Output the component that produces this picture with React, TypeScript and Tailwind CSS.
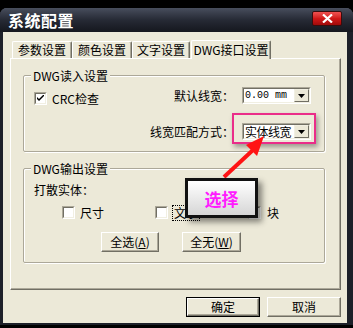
import React from "react";

const font = "font-['Noto_Sans_CJK_SC','Noto_Sans',sans-serif]";

const Check = ({ checked = false }: { checked?: boolean }) => (
  <div className="w-[13px] h-[13px] shrink-0 border border-[#aca899] border-r-white border-b-white">
    <div className="w-full h-full bg-white border border-[#716f64] border-r-[#f1efe2] border-b-[#f1efe2] flex items-center justify-center">
      {checked && (
        <svg width="7" height="7" viewBox="0 0 7 7">
          <path d="M0 2 L0 4 L2 6 L7 1 L7 -1 L2 4 Z" fill="#000" />
        </svg>
      )}
    </div>
  </div>
);

const Combo = ({ children }: { children: React.ReactNode }) => (
  <div className="w-[69px] h-[17px] border border-[#aca899] border-r-white border-b-white">
    <div className="w-full h-full bg-white border border-[#716f64] border-r-[#f1efe2] border-b-[#f1efe2] flex items-center">
      <div className="flex-1 pl-[1px] flex items-center">{children}</div>
      <div className="w-[15px] h-full bg-[#ece9d8] border border-[#f1efe2] border-r-[#716f64] border-b-[#716f64] flex items-center justify-center">
        <svg width="7" height="4" viewBox="0 0 7 4">
          <path d="M0 0 H7 L3.5 4 Z" fill="#000" />
        </svg>
      </div>
    </div>
  </div>
);

const Btn = ({ children, w, def = false }: { children: React.ReactNode; w: string; def?: boolean }) => (
  <div className={`${w} h-[20px] ${def ? "border border-black" : ""}`}>
    <div className="w-full h-full bg-[#ece9d8] border border-white border-r-[#716f64] border-b-[#716f64] shadow-[inset_-1px_-1px_0_#aca899] flex items-center justify-center text-[12px] leading-none text-black">
      {children}
    </div>
  </div>
);

const Tab = ({ label, w, active = false }: { label: string; w: string; active?: boolean }) =>
  active ? (
    <div className={`${w} relative z-10 -mb-px h-[19px] ml-[1px] rounded-t-[2px] bg-[#ece9d8] border-t border-l border-white border-r border-r-[#716f64] shadow-[inset_-1px_0_0_#aca899] flex items-center justify-center text-[12px] leading-none`}>
      {label}
    </div>
  ) : (
    <div className={`${w} h-[17px] rounded-t-[2px] bg-[#ece9d8] border-t border-l border-white border-r border-r-[#716f64] shadow-[inset_-1px_0_0_#aca899] flex items-center justify-center text-[12px] leading-none`}>
      {label}
    </div>
  );

const Group = ({ title, h, children }: { title: string; h: string; children: React.ReactNode }) => (
  <div className={`relative ${h} ml-[12px] w-[302px] border border-[#aca899] rounded-[2px] shadow-[inset_1px_1px_0_#fff,1px_1px_0_#fff]`}>
    <span className="absolute left-[7px] -top-[8px] px-[2px] bg-[#ece9d8] text-[12px] leading-[15px]">{title}</span>
    {children}
  </div>
);

export default function App() {
  return (
    <div className={`relative w-[353px] h-[328px] bg-black overflow-hidden ${font} text-black`}>
      <div className="mt-[8px] h-[317px] flex flex-col rounded-t-[7px] bg-[#1d2029] shadow-[inset_0_1px_0_#5a6070]">
        {/* title bar */}
        <div className="h-[24px] flex justify-between rounded-t-[7px] bg-gradient-to-b from-[#484e5d] via-[#262a35] to-[#15171e]">
          <span className="ml-[8px] mt-[2px] text-[16px] leading-[20px] font-bold text-white tracking-[0.5px]">系统配置</span>
          <div className="mt-[3px] mr-[11px] w-[30px] h-[15px] rounded-[2px] border border-[#3a0d0d] bg-gradient-to-b from-[#f05050] via-[#d01818] to-[#a00a0a] flex items-center justify-center">
            <svg width="11" height="9" viewBox="0 0 11 9">
              <path d="M1 0.5 L10 8.5 M10 0.5 L1 8.5" stroke="#fff" strokeWidth="2.2" />
            </svg>
          </div>
        </div>

        {/* body */}
        <div className="mx-[3px] mr-[6px] h-[291px] bg-[#ece9d8] flex flex-col pl-[7px] pr-[6px]">
          <div className="mt-[6px] h-[20px] flex items-end pl-[2px]">
            <Tab label="参数设置" w="w-[60px]" />
            <Tab label="颜色设置" w="w-[60px]" />
            <Tab label="文字设置" w="w-[58px]" />
            <Tab label="DWG接口设置" w="w-[80px]" active />
          </div>

          <div className="h-[232px] border-t border-l border-white border-r border-b border-r-[#716f64] border-b-[#716f64] shadow-[inset_-1px_-1px_0_#aca899] flex flex-col">
            <div className="mt-[16px]">
              <Group title="DWG读入设置" h="h-[77px]">
                <div className="flex justify-between pl-[10px] pt-[11px] pr-[13px]">
                  <div className="mt-[5px] flex items-center gap-[5px] h-[13px]">
                    <Check checked />
                    <span className="text-[12px] leading-none">CRC检查</span>
                  </div>
                  <div className="flex flex-col items-end gap-[19px]">
                    <div className="flex items-center gap-[8px]">
                      <span className="text-[12px] leading-none">默认线宽：</span>
                      <Combo>
                        <span className="font-['Liberation_Mono',monospace] text-[10px] leading-none whitespace-nowrap">0.00 mm</span>
                      </Combo>
                    </div>
                    <div className="flex items-center gap-[8px]">
                      <span className="text-[12px] leading-none">线宽匹配方式：</span>
                      <Combo>
                        <span className="text-[12px] leading-none whitespace-nowrap tracking-[-0.5px]">实体线宽</span>
                      </Combo>
                    </div>
                  </div>
                </div>
              </Group>
            </div>

            <div className="mt-[16px]">
              <Group title="DWG输出设置" h="h-[95px]">
                <div className="flex flex-col pl-[10px] pt-[14px]">
                  <span className="text-[12px] leading-[14px]">打散实体：</span>
                  <div className="mt-[8px] ml-[28px] flex items-center h-[15px]">
                    <div className="w-[93px] flex items-center gap-[5px]">
                      <Check />
                      <span className="text-[12px] leading-none">尺寸</span>
                    </div>
                    <div className="w-[93px] flex items-center gap-[4px]">
                      <Check />
                      <span className="text-[12px] leading-none border border-dotted border-black px-[1px] py-[1px]">文字</span>
                    </div>
                    <div className="flex items-center gap-[6px]">
                      <Check />
                      <span className="text-[12px] leading-none">块</span>
                    </div>
                  </div>
                  <div className="mt-[12px] ml-[67px] flex gap-[23px]">
                    <Btn w="w-[58px]">全选(<span className="underline">A</span>)</Btn>
                    <Btn w="w-[59px]">全无(<span className="underline">W</span>)</Btn>
                  </div>
                </div>
              </Group>
            </div>
          </div>

          <div className="mt-[7px] flex justify-end gap-[7px]">
            <Btn w="w-[74px]" def>确定</Btn>
            <Btn w="w-[74px]">取消</Btn>
          </div>
        </div>
      </div>

      {/* annotations */}
      <div className="absolute left-[232px] top-[113px] w-[84px] h-[31px] border-2 border-[#ea2d89] shadow-[2px_3px_5px_rgba(0,0,0,0.35)]" />
      <svg className="absolute left-0 top-0" width="353" height="328" viewBox="0 0 353 328">
        <line x1="224" y1="177" x2="253" y2="150" stroke="#ff1414" strokeWidth="4" />
        <polygon points="264,136 246,145 257,156" fill="#ff1414" />
      </svg>
      <div className="absolute left-[185px] top-[178px] w-[73px] h-[40px] border-[3px] border-[#111] bg-gradient-to-b from-white to-[#d6d6d6] shadow-[4px_4px_6px_rgba(0,0,0,0.45)] flex items-center justify-center">
        <span className="text-[17px] leading-none font-bold text-[#ff1cff]">选择</span>
      </div>
    </div>
  );
}
